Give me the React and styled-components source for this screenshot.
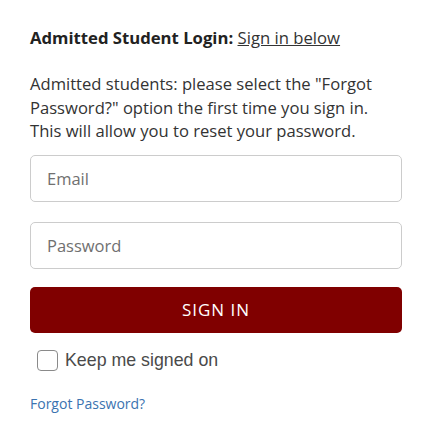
import React from 'react'
import styled, { createGlobalStyle } from 'styled-components'

const GlobalStyle = createGlobalStyle`
  body {
    margin: 0;
    background: #fff;
    font-family: "Open Sans", "Noto Sans", sans-serif;
    color: #333;
  }
`

const Wrapper = styled.div`
  width: 372px;
  padding: 26px 30px 0 30px;
`

const Heading = styled.p`
  margin: 0 0 22px 0;
  font-size: 16.7px;
  line-height: 24px;
  color: #222;
`

const Strong = styled.strong`
  font-weight: 700;
`

const Link = styled.a`
  color: #333;
  text-decoration: underline;
`

const Text = styled.p`
  margin: 0 0 12px 0;
  font-size: 16.6px;
  line-height: 23.5px;
  color: #333;
`

const Form = styled.form`
  display: flex;
  flex-direction: column;
`

const Input = styled.input`
  box-sizing: border-box;
  height: 47px;
  width: 100%;
  margin: 0 0 ${p => p.$gap}px 0;
  padding: 0 16px;
  border: 1px solid #ccc;
  border-radius: 5px;
  font-family: "Open Sans", "Noto Sans", sans-serif;
  font-size: 16.5px;
  color: #333;
  &::placeholder {
    color: #707070;
  }
`

const Button = styled.button`
  height: 46px;
  margin: 0;
  border: none;
  border-radius: 5px;
  background: #800000;
  color: #fff;
  font-family: "Open Sans", "Noto Sans", sans-serif;
  font-size: 17px;
  letter-spacing: 1px;
  text-transform: uppercase;
`

const CheckRow = styled.label`
  display: flex;
  align-items: center;
  gap: 7px;
  margin: 17px 0 0 7px;
  font-family: "Liberation Sans", Arial, sans-serif;
  font-size: 17.8px;
  color: #4a4a4a;
`

const Box = styled.span`
  box-sizing: border-box;
  width: 21px;
  height: 21px;
  border: 1px solid #8a8a8a;
  border-radius: 4px;
  background: #fff;
`

const Forgot = styled.a`
  display: block;
  margin-top: 23px;
  font-family: "Open Sans", "Noto Sans", sans-serif;
  font-size: 14px;
  color: #3b73b0;
  text-decoration: none;
`

export default function App() {
  return (
    <>
      <GlobalStyle />
      <Wrapper>
        <Heading>
          <Strong>Admitted Student Login:</Strong> <Link href="#">Sign in below</Link>
        </Heading>
        <Text>
          Admitted students: please select the "Forgot Password?" option the first time you sign in. This will allow you to reset your password.
        </Text>
        <Form onSubmit={e => e.preventDefault()}>
          <Input type="email" placeholder="Email" $gap={20} />
          <Input type="password" placeholder="Password" $gap={18} />
          <Button type="submit">Sign In</Button>
        </Form>
        <CheckRow>
          <Box />
          Keep me signed on
        </CheckRow>
        <Forgot href="#">Forgot Password?</Forgot>
      </Wrapper>
    </>
  )
}
